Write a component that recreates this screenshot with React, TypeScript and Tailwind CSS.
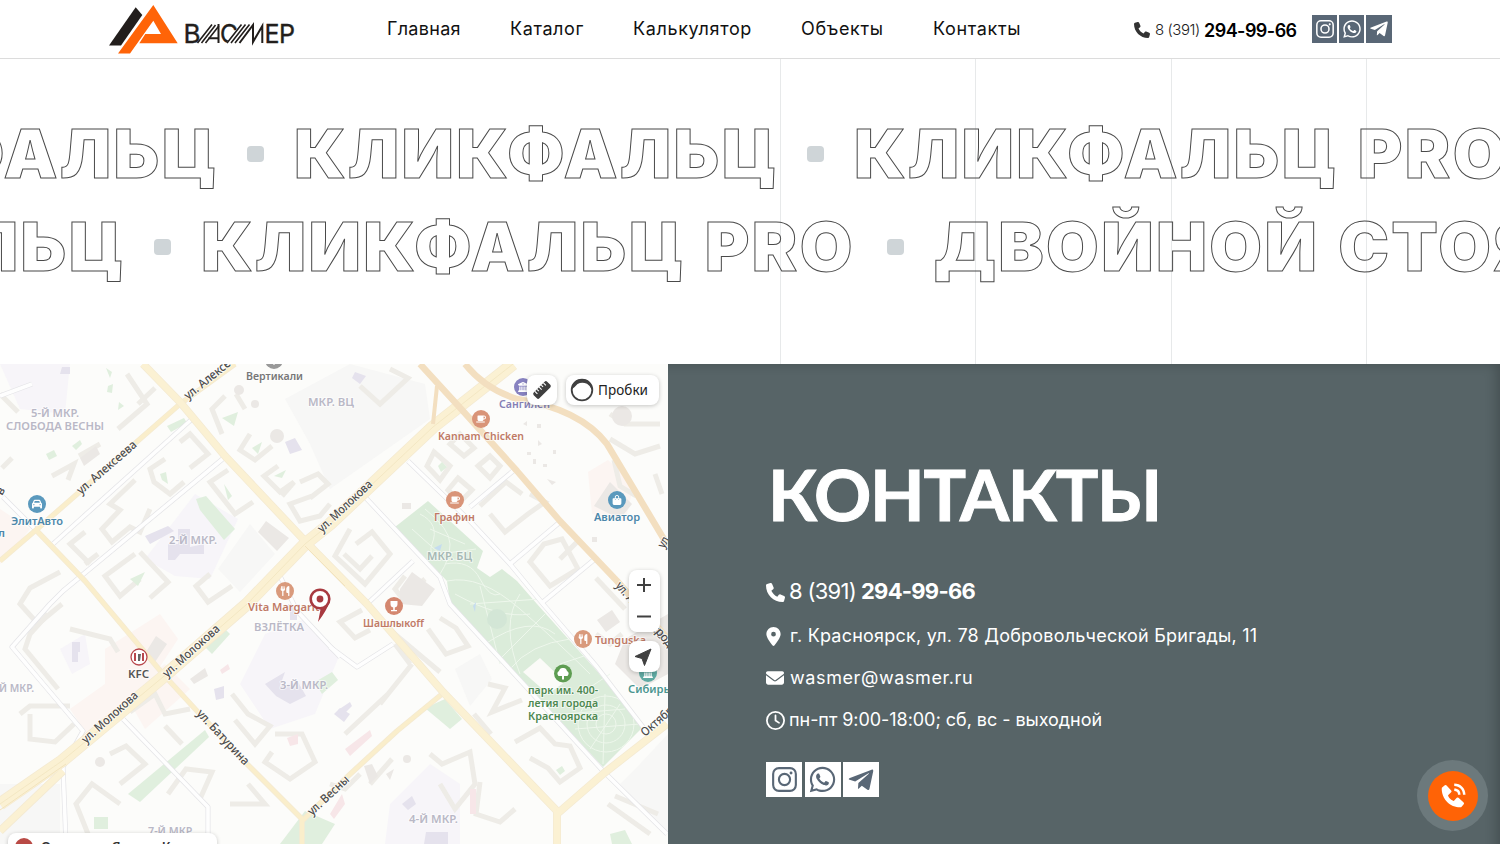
import React from "react";
import { FaPhone, FaLocationDot, FaEnvelope, FaRegClock, FaWhatsapp, FaUtensils, FaMugSaucer, FaCar, FaTree, FaBagShopping, FaBuildingColumns } from "react-icons/fa6";
import { FaTelegramPlane } from "react-icons/fa";
import { BiSolidPhoneCall } from "react-icons/bi";

function Logo() {
  return (
    <svg width="190" height="54" viewBox="107 3 190 54" className="block">
      <path d="M135.7 7.3L142.3 15L121 45.5H109Z" fill="#221e1c" />
      <path fillRule="evenodd" d="M153.3 5L177.7 43.3H139.3L145.3 34H161L153.3 20.7L130 53.5H118Z" fill="#ff6408" />
      <g fill="#221e1c" stroke="#221e1c" strokeWidth="0.4" fontFamily="Inter, sans-serif" fontSize="26" fontWeight="400">
        <text x="183.5" y="43" textLength="17" lengthAdjust="spacingAndGlyphs">В</text>
        <text x="220" y="43" textLength="18" lengthAdjust="spacingAndGlyphs">С</text>
        <text x="264.5" y="43" textLength="15" lengthAdjust="spacingAndGlyphs">Е</text>
        <text x="279" y="43" textLength="16" lengthAdjust="spacingAndGlyphs">Р</text>
      </g>
      <path d="M225.500 44L240.500 24H256L241 44Z" fill="#fff" />
      <g fill="none" stroke="#221e1c">
        <path strokeWidth="1.6" d="M197.5 43L212 24.500M201.500 43L215.500 25M205.500 43L218.8 26M227 43L241.500 24.500M231 43L245.500 24.500M235 43L249.500 24.500" />
        <path strokeWidth="2" d="M218.5 24V43M208.500 38.2H218.5M239.500 43L253 25V42L262.300 26V43" />
      </g>
    </svg>
  );
}

function InstagramMark({ className }: { className: string }) {
  return (
    <svg viewBox="0 0 26 26" className={className} fill="none" stroke="currentColor">
      <rect x="1.2" y="1.2" width="23.6" height="23.6" rx="6" strokeWidth="2.2" />
      <circle cx="13" cy="13" r="5.8" strokeWidth="2.2" />
      <circle cx="19.8" cy="6.3" r="1.5" fill="currentColor" stroke="none" />
    </svg>
  );
}

const nav: [string, string][] = [
  ["Главная", "w-[123px] tracking-[0.3px]"],
  ["Каталог", "w-[123px] tracking-[0.6px]"],
  ["Калькулятор", "w-[168px] tracking-[0.65px]"],
  ["Объекты", "w-[132px] tracking-[0.65px]"],
  ["Контакты", "w-[100px] tracking-[0.65px]"],
];

function Header() {
  return (
    <header className="flex h-[59px] shrink-0 border-b border-[#dcdcdc] bg-white pl-[107px]">
      <div className="w-[280px] pt-[3px]"><Logo /></div>
      <nav className="flex w-[747px] pt-[15px] text-[18px] leading-[27px] text-[#111]">
        {nav.map(([t, w]) => <a key={t} className={`${w} shrink-0 whitespace-nowrap`}>{t}</a>)}
      </nav>
      <div className="flex h-[60px] w-[178px] items-center whitespace-nowrap">
        <FaPhone className="size-4 shrink-0 text-[#333]" />
        <span className="ml-[5px] mt-px w-[49px] text-[15px] font-light tracking-[-0.45px] text-[#222]">8 (391)</span>
        <span className="text-[18px] font-semibold tracking-[-0.55px] text-black">294-99-66</span>
      </div>
      <div className="flex gap-[2px] pt-[15px] text-white">
        <span className="flex h-7 w-[25px] items-center justify-center bg-[#596776] pb-px"><InstagramMark className="size-[18px]" /></span>
        <span className="flex h-7 w-[25px] items-center justify-center bg-[#596776]"><FaWhatsapp className="size-[20px]" /></span>
        <span className="flex h-7 w-[26px] items-center justify-center bg-[#596776]"><FaTelegramPlane className="size-[20px]" /></span>
      </div>
    </header>
  );
}

function Dot() {
  return <i className="mt-[25px] block h-[16px] w-[17px] shrink-0 rounded-[4px] bg-[#cfd5d8]" />;
}

const outline = "shrink-0 [-webkit-text-fill-color:transparent] [-webkit-text-stroke:1px_#4a4a4a]";

function Marquee() {
  return (
    <section className="relative h-[305px] shrink-0 overflow-hidden">
      <div className="flex h-full pl-[780px]">
        {[0, 1, 2, 3].map((i) => <div key={i} className="w-[195.3px] shrink-0 border-l border-[#e7e9ea]" />)}
      </div>
      <div className="absolute inset-x-0 top-[62px] overflow-hidden whitespace-nowrap text-[68px] font-black leading-[64px] tracking-[2.4px] [word-spacing:3px]">
        <div className="-ml-[266px] flex h-[93px]">
          <span className={`${outline} w-[513px]`}>КЛИКФАЛЬЦ</span>
          <Dot />
          <span className={`${outline} ml-[30px] w-[513px]`}>КЛИКФАЛЬЦ</span>
          <Dot />
          <span className={`${outline} ml-[30px]`}>КЛИКФАЛЬЦ PRO</span>
        </div>
        <div className="-ml-[359px] flex h-[80px]">
          <span className={`${outline} w-[513px]`}>КЛИКФАЛЬЦ</span>
          <Dot />
          <span className={`${outline} ml-[30px] w-[686px]`}>КЛИКФАЛЬЦ PRO</span>
          <Dot />
          <span className={`${outline} ml-[30px]`}>ДВОЙНОЙ СТОЯЧИЙ ФАЛЬЦ</span>
        </div>
      </div>
    </section>
  );
}

const buildings = [
  "M127 10L147 40L118 65", "M155 24L138 40M79 92L100 80M52 112L74 100L68 116M0 30L18 48M2 104L12 94", "M180 78L190 70L208 90L190 104",
  "M165 95L150 105L154 118L170 130L184 118", "M135 116L110 140L120 146L102 165L112 178L130 163L140 168L150 145", "M228 106L210 118L235 150L253 138",
  "M85 168L70 180L90 200M85 200L98 190", "M225 32L212 45L222 70M236 30L245 45M250 70L240 86L255 96L272 82", "M278 102L264 112L280 128L294 118L282 132",
  "M300 118L318 110L328 120L310 134M312 132L290 140L300 157L320 152L330 140", "M135 190L105 212L120 232L140 215M140 188L168 218L150 234",
  "M60 208L30 224L20 240L38 260L62 240", "M210 210L196 222L208 238L232 222", "M390 5L408 14L380 40L360 22", "M434 88L450 102L440 116L427 102Z M460 70L474 84L464 92L450 80Z M490 92L500 102L490 114L478 102Z M458 114L472 126L460 138L448 126Z",
  "M480 142L506 118L522 130M490 150L505 168L528 150L545 138L530 130", "M350 165L335 192L365 220L390 190L372 168L356 180", "M344 190L360 205L372 192", "M530 198L550 222L578 205L562 175L544 180Z",
  "M405 212L395 225L402 234L425 215", "M596 214L625 245", "M362 246L340 258L355 274L370 266M390 266L440 308M428 265L446 290L468 282L456 264L440 254",
  "M412 300L380 340M395 280L410 300M345 370L388 330M488 320L505 324L492 348L522 336", "M474 350L491 370", "M515 378L540 364L555 380L570 382L580 404L560 418L548 404L530 394",
  "M430 390L442 400L470 388L475 420L455 445L440 420", "M480 418L476 450L500 458L515 445", "M20 350L30 342L70 342M30 350V375L55 378L74 360", "M48 250L30 270L25 285L58 325M70 265L110 275L118 288",
  "M130 348L155 330L165 350L190 345M165 362L182 380M110 390L126 382L145 400L120 420", "M232 330L248 350L270 362L255 380L235 356",
  "M272 388L265 398L290 415L315 398L302 370L275 370", "M120 440L92 420L76 440L88 470M168 430L186 405L212 408L200 435M230 440L265 440L248 420",
  "M610 50L625 60L660 60M610 75L635 90L660 82M614 96L620 122L636 132M655 110L662 130", "M560 195L580 175M596 270L610 280L622 270", "M360 410L345 425L330 420M370 420L392 395", "M608 440L650 470M615 432L658 450",
];
const pinkAreas = ["M0 145L30 165L14 185L0 200Z", "M105 285L160 250L178 275L150 318L90 375L70 345L105 320Z", "M125 330L165 300L190 325L145 365Z", "M588 108L608 96L634 120L625 158L592 150Z"];
const lilacAreas = ["M145 195L195 130L238 155L210 215L175 212Z", "M265 270L305 255L340 290L315 350L270 365L240 320Z", "M0 0H70L65 50L20 45Z", "M390 440L430 400L460 420V480H385Z", "M60 285L85 270L90 300L72 310Z"];
const grayAreas = ["M250 160L275 190L240 228L218 205Z", "M285 35L350 0L425 20L430 55L330 125L310 80Z", "M455 305L480 290L492 315L470 342Z", "M0 420H60V480H0Z", "M640 400L668 370V470L620 420Z"];
const deepBuildings = ["M145 172L168 162L174 167L150 180ZM178 165H190V183L204 180V190H180L175 196H168V180H178Z", "M265 320L285 308L280 322L298 318L306 332L290 340L276 332Z", "M62 3H70V10H60ZM285 78L295 74L302 86L290 90ZM355 8L366 12L360 20L352 14Z", "M334 350L340 344L350 350L344 358ZM402 440L412 432L416 440L408 446ZM426 468H448V480H424Z"];
const greens = ["M196 135L206 132L235 165L224 176L200 146Z", "M167 62L184 54L187 59L171 68Z", "M128 430L205 366L209 373L140 438Z", "M200 278L222 262L230 270L212 290Z", "M425 344L445 335L462 355L450 365Z", "M280 480L305 447L335 460L322 480Z", "M94 453H108V465H94Z", "M315 318L332 308L338 316L322 330Z", "M46 90L54 86L57 92L49 96ZM72 82L80 76L82 80L76 86Z", "M108 22L113 20L112 29L107 28ZM106 4L112 8L110 14ZM119 38L124 42L118 46Z", "M222 54L238 48L234 62ZM160 110L166 108L168 120L162 116ZM252 84L262 78L258 90Z", "M274 112L286 106L282 114ZM224 120L232 132L228 136ZM130 215L145 208L138 222Z", "M556 406L562 402L565 407L560 411ZM610 470L625 466L632 480H612ZM438 102L442 98L447 103L441 108Z"];

const side = [
  "M192 55L53 180", "M225 93L63 227L50 240L12 283L83 367L63 403L66 480", "M3 133L36 166", "M408 97L470 157L510 200L543 240L597 303L643 363", "M513 107L470 143", "M560 158L510 200",
  "M595 195L543 238", "M365 133L440 213L450 240L530 327L603 407L667 470", "M413 197L367 240", "M123 355L208 443V480", "M330 283L357 303L393 280", "M280 212L297 247L340 293", "M32 20L0 32",
];
const minor = ["M0 197L36 166L180 40L235 0", "M36 166L85 217L163 310L197 347L247 400L302 455V480", "M302 457L347 413L397 367L442 330"];
const main = ["M0 467L63 407", "M143 0L180 38L225 92L305 177L367 240L443 328L557 447V480", "M557 450L603 410L667 360"];
const big = "M0 440L62 397L163 313L247 240L305 180L330 160L433 63L513 0";
const orange = ["M420 0L463 47L517 107L560 157L617 217L668 275", "M437 22L433 60", "M465 0Q485 25 517 35Q580 45 607 80L668 182"];

type Lab = { t: string; x: number; y: number; w: number; c?: string; r?: number };
const labels: Lab[] = [
  { t: "5-Й МКР.", x: 31, y: 53, w: 48, c: "#b9b8c6" }, { t: "СЛОБОДА ВЕСНЫ", x: 6, y: 66, w: 98, c: "#b9b8c6" }, { t: "МКР. ВЦ", x: 308, y: 42, w: 46, c: "#b9b8c6" },
  { t: "2-Й МКР.", x: 169, y: 180, w: 48, c: "#b9b8c6" }, { t: "МКР. БЦ", x: 427, y: 196, w: 45, c: "#a5b8b4" }, { t: "ВЗЛЁТКА", x: 254, y: 267, w: 50, c: "#b9b8c6" },
  { t: "3-Й МКР.", x: 280, y: 325, w: 48, c: "#b9b8c6" }, { t: "Й МКР.", x: -1, y: 328, w: 35, c: "#b9b8c6" }, { t: "7-Й МКР.", x: 148, y: 471, w: 46, c: "#b9b8c6" }, { t: "4-Й МКР.", x: 409, y: 459, w: 49, c: "#b9b8c6" },
  { t: "Вертикали", x: 246, y: 16, w: 57, c: "#777" }, { t: "Kannam Chicken", x: 438, y: 75.5, w: 86, c: "#c07a66" }, { t: "Графин", x: 434, y: 157, w: 41, c: "#c07a66" }, { t: "Авиатор", x: 594, y: 157, w: 46, c: "#4c87aa" },
  { t: "ЭлитАвто", x: 11, y: 161, w: 52, c: "#4c87aa" }, { t: "л", x: -2, y: 173, w: 7, c: "#4c87aa" }, { t: "Сангилен", x: 499, y: 44, w: 51, c: "#8580b5" }, { t: "Vita Margarita", x: 248, y: 246.5, w: 78, c: "#c07a66" },
  { t: "Шашлыкоff", x: 363, y: 263, w: 61, c: "#c07a66" }, { t: "Tunguska", x: 595, y: 280, w: 51, c: "#c07a66" }, { t: "KFC", x: 128, y: 314, w: 21, c: "#555" }, { t: "Сибирь", x: 628, y: 329, w: 42, c: "#4b9690" },
  { t: "парк им. 400-", x: 528, y: 330, w: 70, c: "#4d8850" }, { t: "летия города", x: 528, y: 343, w: 70, c: "#4d8850" }, { t: "Красноярска", x: 528, y: 355.5, w: 70, c: "#4d8850" },
];
const streets: Lab[] = [
  { t: "ул. Алексеева", x: 81, y: 131, w: 75, r: -41 }, { t: "ул. Алексеева", x: 188, y: 36, w: 75, r: -39 }, { t: "ул. Молокова", x: 322, y: 169, w: 70, r: -43 },
  { t: "ул. Молокова", x: 167, y: 314, w: 72, r: -42 }, { t: "ул. Молокова", x: 86, y: 380, w: 71, r: -42 }, { t: "ул. Батурина", x: 196, y: 350, w: 71, r: 47 },
  { t: "ул. Весны", x: 312, y: 452, w: 52, r: -43 }, { t: "Октябрьская", x: 645, y: 373, w: 68, r: -41 }, { t: "ул. Авиаторов", x: 615, y: 222, w: 70, r: 50 }, { t: "родок", x: 655, y: 268, w: 34, r: 50 }, { t: "ул.", x: 664, y: 185, w: 14, r: -60 }, { t: "в", x: 2, y: 132, w: 7, r: -60 },
];
const pois: { x: number; y: number; c: string; I: React.ComponentType<{ x?: number; y?: number; size?: number; color?: string }> }[] = [
  { x: 285, y: 227, c: "#d99a7c", I: FaUtensils }, { x: 583, y: 275, c: "#d99a7c", I: FaUtensils }, { x: 481, y: 55, c: "#d99478", I: FaMugSaucer },
  { x: 455, y: 136, c: "#d99478", I: FaMugSaucer }, { x: 37, y: 140, c: "#5a99bd", I: FaCar }, { x: 617, y: 136, c: "#5a99bd", I: FaBagShopping },
  { x: 648, y: 309, c: "#5fa9a2", I: FaBuildingColumns }, { x: 523, y: 23, c: "#8782c0", I: FaBuildingColumns }, { x: 274, y: -4, c: "#999", I: FaTree },
];

function CityMap() {
  return (
    <svg width="668" height="480" viewBox="0 0 668 480" className="absolute inset-0 block">
      <rect width="668" height="480" fill="#fcfcfa" />
      {grayAreas.map((d) => <path key={d} d={d} fill="#f7f7f6" />)}
      {pinkAreas.map((d) => <path key={d} d={d} fill="#fcf5f2" />)}
      {lilacAreas.map((d) => <path key={d} d={d} fill="#f7f5f9" />)}
      <g fill="none" stroke="#eeece7" strokeWidth="5">{buildings.map((d) => <path key={d} d={d} />)}</g>
      <g fill="#ebe8e5">
        <path d="M258 168L266 157L289 174L277 187ZM400 225L412 208L435 225L422 242L400 240ZM146 288L156 272L167 280L155 298ZM80 94L96 82L100 90L84 102Z" />
        <path d="M594 142L610 118L632 140L620 155ZM615 300L625 275L668 250V310L640 325ZM597 256L612 246L620 258L606 268Z" />
        <circle cx="277" cy="72" r="7" /><circle cx="239" cy="26" r="5" /><circle cx="255" cy="40" r="4" /><circle cx="100" cy="398" r="5" /><circle cx="407" cy="395" r="4" /><circle cx="622" cy="52" r="10" />
        <path d="M364 402L372 400L378 412L370 420ZM386 410L394 405L390 416ZM190 315L205 304L208 312L194 320Z" />
        <path d="M537 60h4v4h-4zM523 60l4 -3v5zM527 88h4v3h-4zM533 95h3v5h-3zM543 100h4v3h-4zM538 76l4 4l-4 2zM553 86h3v4h-3zM547 115l5 6l4 -3zM402 139h9v6h-9zM592 173h5v5h-5z" />
      </g>
      <path d="M345 385L370 366L372 372L350 392ZM470 425H476V450H470ZM220 306L228 300L230 305L222 310ZM287 374L298 370V380L290 382ZM330 450L342 430L345 440L334 455Z" fill="#f7e6e8" />
      <g fill="#e5e2ed">{deepBuildings.map((d) => <path key={d} d={d} />)}
        <path d="M72 278H80V288H78V298H72ZM288 240H300V246H297V256H290V246H288ZM214 325L224 322V334L216 336ZM338 346L350 338L352 342L342 352Z" />
      </g>
      <g fill="#e0efde">{greens.map((d) => <path key={d} d={d} />)}</g>
      <path d="M428 137L395 163L447 217L450 240L603 403L643 363L597 307L537 240L517 217L502 205L490 213L477 204L483 187Z" fill="#dbecda" />
      <path d="M523 308L540 294L565 318L548 330Z" fill="#fbfbf8" />
      <g fill="none" stroke="#eef7ec" strokeWidth="1">
        <path d="M420 150Q440 160 432 180T470 195M412 165L440 190L476 185M425 145Q450 165 450 180T440 210M430 165L465 180M445 200Q470 195 480 215T500 230M447 217Q480 210 520 245T590 310M470 240L540 235M455 230Q500 255 530 250M485 280Q530 250 555 270M500 295L545 250M510 305Q530 280 570 275M560 300L590 290M580 330L610 310M565 350L625 345M575 365L640 360M590 385L620 340M603 400L605 330M480 222L500 300M520 230Q500 260 520 310" />
        <circle cx="606" cy="360" r="10" /><circle cx="606" cy="360" r="19" /><circle cx="606" cy="360" r="28" /><circle cx="497" cy="255" r="10" fill="#d3e6d6" stroke="none" />
      </g>
      <path d="M434 184L442 180L440 187ZM473 242L476 238L475 248Z" fill="#c5dcef" />
      <g fill="none" strokeLinejoin="round">
        {side.map((d) => <path key={d} d={d} stroke="#e4e4e7" strokeWidth="5" />)}
        {side.map((d) => <path key={d} d={d} stroke="#fefefe" strokeWidth="3.6" />)}
        {minor.map((d) => <path key={d} d={d} stroke="#f4ead2" strokeWidth="5.5" />)}
        {minor.map((d) => <path key={d} d={d} stroke="#faeecb" strokeWidth="4" />)}
        {main.map((d) => <path key={d} d={d} stroke="#f4ead2" strokeWidth="8" />)}
        <path d={big} stroke="#f4ead2" strokeWidth="13" />
        {main.map((d) => <path key={d} d={d} stroke="#fbf1d3" strokeWidth="6.5" />)}
        <path d={big} stroke="#fbf1d3" strokeWidth="11.5" />
        <path d={big} stroke="#f1e4bf" strokeWidth="0.8" />
        <path d="M0 446L40 418L66 400M305 182L345 222" stroke="#f2e3bd" strokeWidth="1" />
        {orange.map((d, i) => <path key={d} d={d} stroke="#f3dfc0" strokeWidth={i === 1 ? 4 : 6.5} />)}
      </g>
      <g fontFamily="'Noto Sans', sans-serif" fontSize="11" fontWeight="600" stroke="#fff" strokeWidth="2" paintOrder="stroke" strokeLinejoin="round">
        {labels.map((l, i) => <text key={i} x={l.x} y={l.y} textLength={l.w} lengthAdjust="spacingAndGlyphs" fill={l.c} strokeOpacity="0.6">{l.t}</text>)}
      </g>
      <g fontFamily="'Noto Sans', sans-serif" fontSize="12" fontWeight="500" fill="#4c4c4c" stroke="#fff" strokeWidth="2" paintOrder="stroke" strokeOpacity="0.7">
        {streets.map((l, i) => <text key={i} transform={`translate(${l.x} ${l.y}) rotate(${l.r})`} textLength={l.w} lengthAdjust="spacingAndGlyphs">{l.t}</text>)}
      </g>
      {pois.map(({ x, y, c, I }) => (
        <g key={`${x}-${y}`}><circle cx={x} cy={y} r="9" fill={c} /><I x={x - 5} y={y - 5} size={10} color="#fff" /></g>
      ))}
      <circle cx="394" cy="242" r="9" fill="#d4876f" />
      <path d="M390.500 237H397.500V240Q397.500 243 394.800 243.500V246H397V247.300H391V246H393.200V243.500Q390.500 243 390.500 240Z" fill="#fff" />
      <circle cx="563" cy="309.500" r="9" fill="#5e9d52" />
      <path d="M558.500 312Q556 309 559 307Q560 303.500 563 304Q566 303.500 567 307Q570 309 567.500 312H564V315.500H562V312Z" fill="#fff" />
      <circle cx="139" cy="293" r="8" fill="#fff" stroke="#b8474c" strokeWidth="1.3" />
      <path d="M135 289V297M143 289V297" stroke="#b8474c" strokeWidth="2" /><path d="M138 290H141L140 297H138Z" fill="#666" />
      <path d="M330 237Q327 246 318 258L320.500 245.500L314 242.500Z" fill="#a83a40" stroke="#fff" strokeWidth="1.5" paintOrder="stroke" />
      <circle cx="320" cy="235" r="9.3" fill="#fff" stroke="#a83a40" strokeWidth="2.6" />
      <circle cx="320" cy="235" r="3.4" fill="#a83a40" />
    </svg>
  );
}

function MapPanel() {
  const card = "absolute bg-white shadow-[0_1px_4px_rgba(0,0,0,0.22)]";
  return (
    <div className="relative h-[480px] w-[668px] shrink-0 overflow-hidden">
      <CityMap />
      <div className={`${card} left-[527px] top-[11px] flex h-[30px] w-[30px] items-center justify-center rounded-[8px]`}>
        <svg width="20" height="20" viewBox="0 0 20 20">
          <g transform="rotate(-45 10 10)">
            <rect x="0.5" y="6" width="19" height="8" rx="1.8" fill="#3f3f3f" />
            <path d="M4 6V9.5M7 6V8.5M10 6V9.5M13 6V8.5M16 6V9.5" stroke="#fff" strokeWidth="1.1" />
          </g>
        </svg>
      </div>
      <div className={`${card} left-[566px] top-[11px] flex h-[30px] w-[93px] items-center rounded-[8px] pl-[4px] font-['Noto_Sans',sans-serif] text-[13.5px] leading-none tracking-[0.05px] text-[#222]`}>
        <svg width="24" height="24" viewBox="0 0 24 24" className="mr-[4px]">
          <circle cx="12" cy="12" r="10.300" fill="none" stroke="#404040" strokeWidth="1.8" />
          <path d="M2 8Q5 1 12 1Q19 1 22 8V12Q20 7.500 17 5.800Q12 3.500 7.500 6Q5 9 2 11Z" fill="#404040" />
        </svg>
        <span className="pt-px">Пробки</span>
      </div>
      <div className={`${card} left-[629px] top-[206px] flex h-[62px] w-[31px] flex-col items-center rounded-[8px]`}>
        <svg width="31" height="62" viewBox="0 0 31 62" stroke="#404040" strokeWidth="2"><path d="M8 15H22M15 8V22M8 46.500H22" /></svg>
      </div>
      <div className={`${card} left-[629px] top-[277px] flex h-[31px] w-[31px] items-center justify-center rounded-[8px]`}>
        <svg width="31" height="31" viewBox="0 0 31 31"><path d="M22 8L6 15.500L13 17.500L15.500 24.500Z" fill="#404040" stroke="#404040" strokeLinejoin="round" /></svg>
      </div>
      <div className={`${card} left-[8px] top-[469px] flex h-[30px] w-[209px] items-start rounded-[8px] pl-[7px] pt-[5px] font-['Noto_Sans',sans-serif] text-[13px] font-semibold leading-[14px] text-[#333]`}>
        <span className="mr-[8px] block size-[18px] shrink-0 rounded-full bg-[#b94a45]" />
        <span className="whitespace-nowrap pt-px">Открыть в Яндекс Картах</span>
      </div>
    </div>
  );
}

function Contacts() {
  const tile = "flex h-[35px] w-[36px] items-center justify-center bg-white text-[#596776]";
  return (
    <div className="flex h-[480px] flex-1 flex-col bg-[#576467] pl-[98px] text-white shadow-[inset_-12px_8px_12px_-8px_rgba(0,0,0,0.2)]">
      <h2 className="mt-[87px] ml-[2px] h-[85px] font-['Lato',sans-serif] text-[71px] font-bold leading-[85px] tracking-[-1.3px] [-webkit-text-stroke:1px_white]">КОНТАКТЫ</h2>
      <ul className="mt-[34px] flex flex-col whitespace-nowrap text-[18px] leading-[28px]">
        <li className="flex h-[42px] items-center text-[22px]">
          <FaPhone className="mt-[2px] mr-[4px] size-[19px]" />
          <span className="w-[72px] tracking-[-0.7px]">8 (391)</span>
          <span className="font-bold tracking-[-0.75px]">294-99-66</span>
        </li>
        <li className="mt-[3px] flex h-[42px] items-center tracking-[0.22px]"><FaLocationDot className="mr-[9px] h-[19px] w-[15px]" />г. Красноярск, ул. 78 Добровольческой Бригады, 11</li>
        <li className="flex h-[42px] items-center tracking-[0.6px]"><FaEnvelope className="mr-[6px] size-[18px]" />wasmer@wasmer.ru</li>
        <li className="flex h-[42px] items-center tracking-[-0.05px]"><FaRegClock className="mr-[4px] size-[19px]" />пн-пт 9:00-18:00; сб, вс - выходной</li>
      </ul>
      <div className="mt-[21px] flex gap-[2.5px]">
        <span className={tile}><InstagramMark className="size-[25px]" /></span>
        <span className={tile}><FaWhatsapp className="size-[29px]" /></span>
        <span className={tile}><FaTelegramPlane className="size-[28px]" /></span>
      </div>
    </div>
  );
}

export default function App() {
  return (
    <div className="relative flex h-[844px] w-[1500px] flex-col overflow-hidden bg-white font-['Inter','Liberation_Sans',sans-serif]">
      <Header />
      <Marquee />
      <section className="flex"><MapPanel /><Contacts /></section>
      <button className="absolute left-[1417px] top-[760px] flex size-[71px] items-center justify-center rounded-full bg-[#6c797c]">
        <span className="flex size-[50px] items-center justify-center rounded-full bg-[#ff6306]"><BiSolidPhoneCall className="size-[30px] text-white" /></span>
      </button>
    </div>
  );
}
